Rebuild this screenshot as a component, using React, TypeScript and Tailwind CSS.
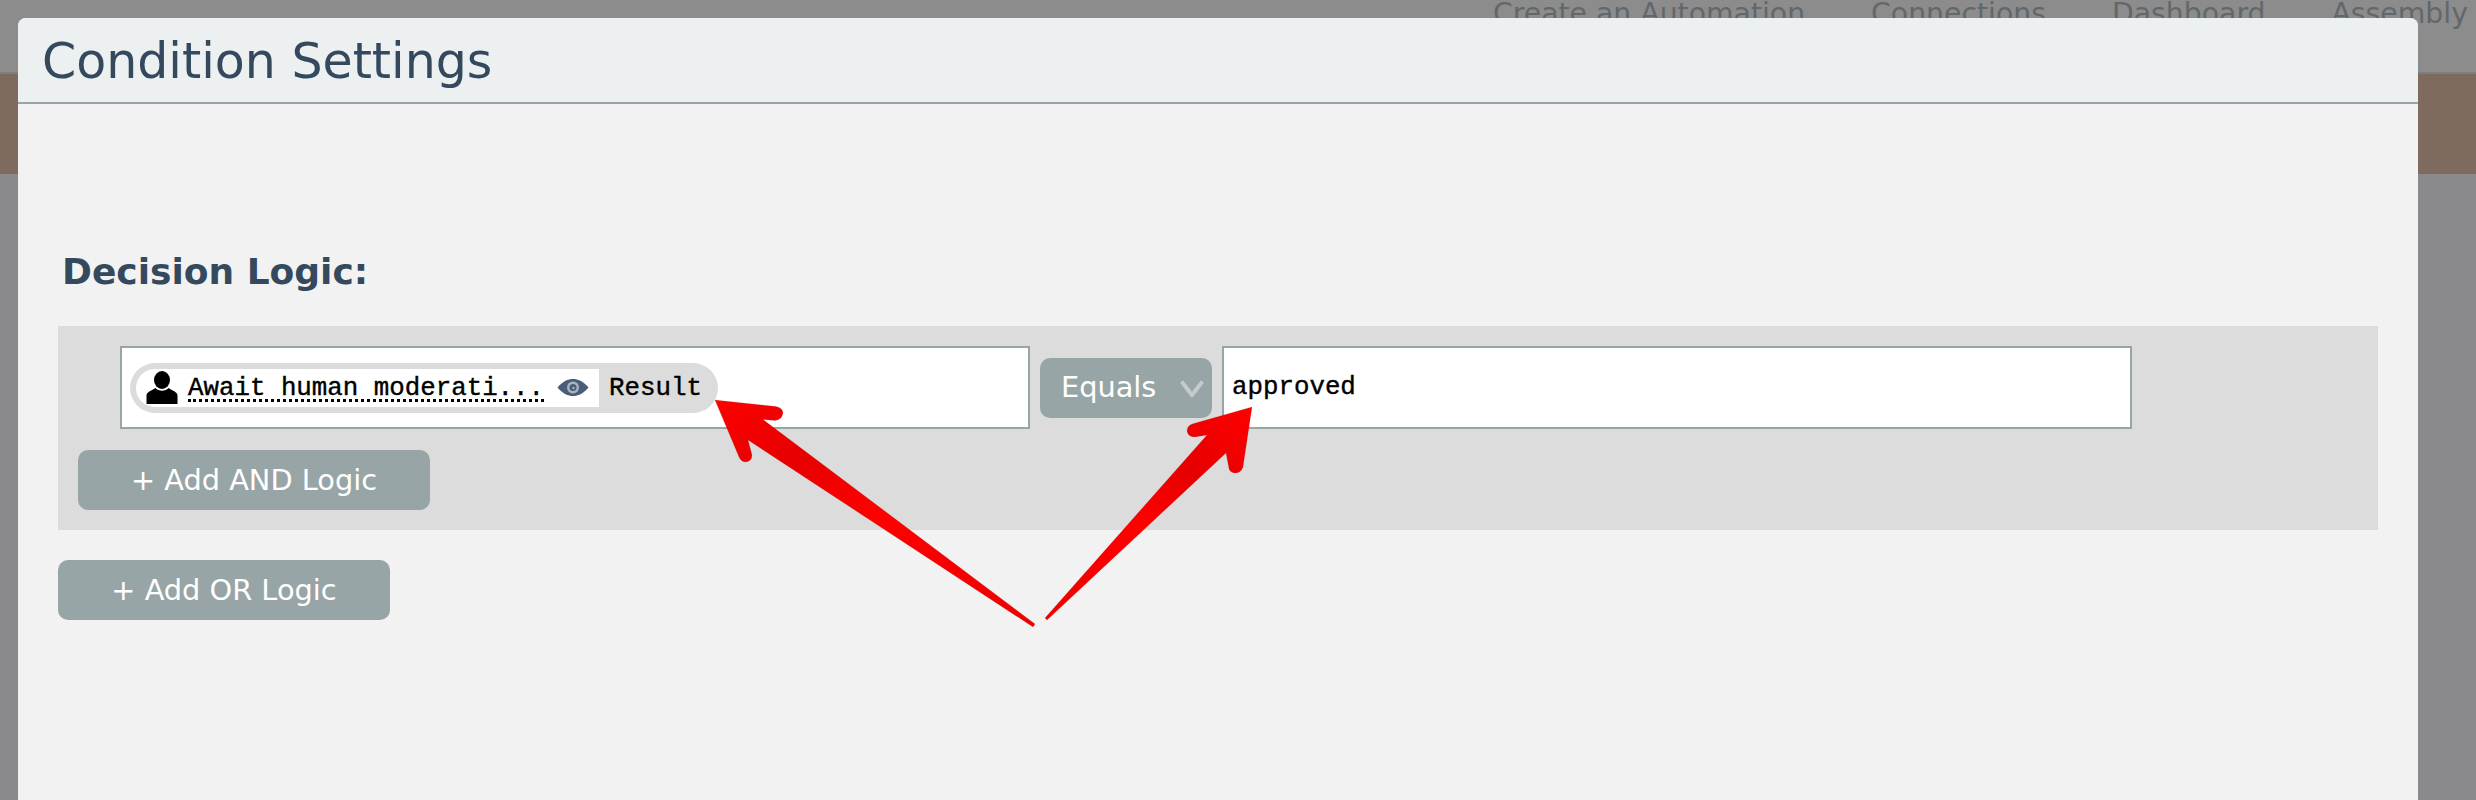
import React from 'react';

const sans = 'font-["DejaVu_Sans",sans-serif]';
const mono = "font-['Liberation_Mono',monospace] text-[25.8px] text-black [-webkit-text-stroke:0.4px_black]";

const PersonIcon = () => (
  <svg width="32" height="33" viewBox="0 0 32 33" className="shrink-0 blur-[0.5px]">
    <ellipse cx="16" cy="9" rx="8" ry="9" fill="#000" />
    <path d="M0.5 33 V24.5 C0.5 21 5 20 9.5 17 C12.5 20.5 19.5 20.5 22.5 17 C27 20 31.5 21 31.5 24.5 V33 Z" fill="#000" />
  </svg>
);

const EyeIcon = () => (
  <svg width="32" height="17" viewBox="0 0 32 17" className="shrink-0 blur-[0.4px]">
    <path d="M0.5 8.5 C6 2 11 0 16 0 C21 0 26 2 31.5 8.5 C26 15 21 17 16 17 C11 17 6 15 0.5 8.5 Z" fill="#4a5d78" />
    <circle cx="16" cy="8.5" r="6" fill="#a9b3bf" />
    <circle cx="16" cy="8.5" r="3.5" fill="#4a5d78" />
    <circle cx="16.5" cy="9" r="1.2" fill="#a9b3bf" />
  </svg>
);

// the two callout arrows drawn on top of the form
const Arrows = () => (
  <svg width="2476" height="800" viewBox="0 0 2476 800" className="absolute left-0 top-0 pointer-events-none">
    <defs>
      <linearGradient id="redLeft" x1="0" y1="0" x2="1" y2="1">
        <stop offset="0" stopColor="#ff0000" />
        <stop offset="0.25" stopColor="#e60000" />
        <stop offset="0.5" stopColor="#ff0000" />
        <stop offset="1" stopColor="#f00000" />
      </linearGradient>
      <linearGradient id="redRight" x1="1" y1="0" x2="0" y2="1">
        <stop offset="0" stopColor="#ff0000" />
        <stop offset="0.3" stopColor="#e60000" />
        <stop offset="0.55" stopColor="#ff0000" />
        <stop offset="1" stopColor="#f00000" />
      </linearGradient>
    </defs>
    <path
      d="M715 400 L776 406.5 Q783 408 783 413 Q782 420 775 420.5 L763 419.5 L1035 624 L1033 627 L748 440 L752 455 Q752 461 746 462 Q741 462 739 457 Z"
      fill="url(#redLeft)"
      stroke="#8a3a3a"
      strokeOpacity="0.25"
      strokeWidth="0.6"
    />
    <path
      d="M1252 407 L1243 467 Q1241 473 1235 473 Q1229 473 1228.5 466 L1226 453 L1047 620 L1045 618 L1207 435 L1195 437 Q1188 437 1187 431 Q1187 426 1192 424 Z"
      fill="url(#redRight)"
      stroke="#8a3a3a"
      strokeOpacity="0.25"
      strokeWidth="0.6"
    />
  </svg>
);

const App: React.FC = () => {
  return (
    <div className={`relative h-[800px] w-[2476px] overflow-hidden bg-[#8a8a8c] ${sans}`}>
      {/* page behind the modal */}
      <div className="flex h-[72px] gap-[66px] overflow-hidden whitespace-nowrap bg-[#8c8c8c] pl-[1493px] text-[28.3px] leading-[27px] text-[#62676b]">
        <span>Create an Automation</span>
        <span>Connections</span>
        <span>Dashboard</span>
        <span>Assembly Lines</span>
      </div>
      <div className="h-[102px] border-t-2 border-[#7c7f80] bg-[#7f6a5e]" />

      {/* modal */}
      <div className="absolute left-[18px] top-[18px] flex h-[782px] w-[2400px] flex-col rounded-t-lg bg-[#f2f2f2]">
        <div className="flex h-[86px] items-center rounded-t-lg border-b-2 border-[#98a5a6] bg-[#ecf0f1] pl-[24px] pt-[3px] text-[49px] text-[#34495e]">
          Condition Settings
        </div>
        <div className="flex flex-col pl-[40px] pr-[40px]">
          <h2 className="mt-[146px] pl-[4px] text-[36px] font-bold leading-[44px] text-[#34495e]">Decision Logic:</h2>
          <div className="mt-[32px] flex h-[204px] flex-col bg-[#dcdcdc] pl-[20px] pt-[20px]">
            <div className="flex items-start pl-[42px]">
              <div className="flex h-[83px] w-[910px] items-center border-2 border-[#98a5a6] bg-white pl-[8px]">
                <div className="flex h-[50px] items-center rounded-[25px] bg-[#dcdcdc] pl-[6px] pr-[16px]">
                  <div className="flex h-[38px] w-[463px] items-center rounded-l-[19px] bg-white pl-[10px]">
                    <PersonIcon />
                    <span className={`ml-[10px] mt-[5px] whitespace-nowrap border-b-[3px] border-dotted border-black leading-[20px] ${mono}`}>
                      Await human moderati...
                    </span>
                    <span className="ml-[13px]"><EyeIcon /></span>
                  </div>
                  <span className={`ml-[10px] mt-[3px] ${mono}`}>Result</span>
                </div>
              </div>
              <div className="ml-[10px] mt-[12px] flex h-[60px] w-[172px] items-center rounded-[10px] bg-[#98a5a6] pl-[21px] text-[28.8px] text-white">
                Equals
                <svg width="24" height="17" viewBox="0 0 24 17" className="ml-[24px]">
                  <path d="M1.5 1.5 L12 15 L22.5 1.5" fill="none" stroke="#c5cacb" strokeWidth="4" />
                </svg>
              </div>
              <div className={`ml-[10px] flex h-[83px] w-[910px] items-center border-2 border-[#98a5a6] bg-white pl-[8px] pt-[2px] ${mono}`}>
                approved
              </div>
            </div>
            <div className="mt-[21px] flex h-[60px] w-[352px] items-center justify-center rounded-[10px] bg-[#98a5a6] pt-[2px] text-[28.8px] text-white">
              + Add AND Logic
            </div>
          </div>
          <div className="mt-[30px] flex h-[60px] w-[332px] items-center justify-center rounded-[10px] bg-[#98a5a6] pt-[2px] text-[28.8px] text-white">
            + Add OR Logic
          </div>
        </div>
      </div>

      <Arrows />
    </div>
  );
};

export default App;
